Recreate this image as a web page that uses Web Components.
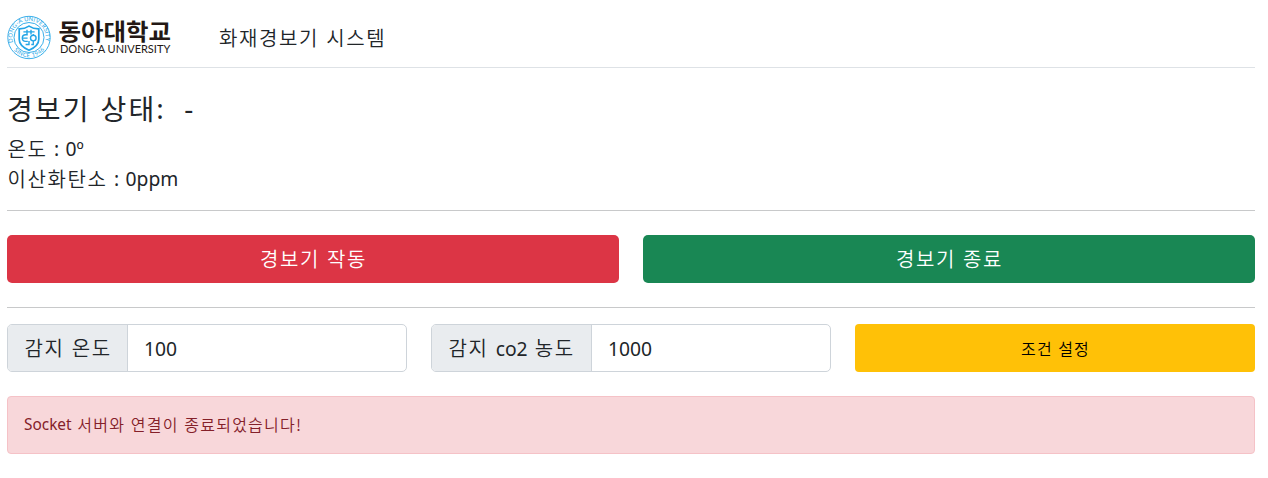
<!DOCTYPE html>
<html lang="ko"><head><meta charset="utf-8"><title>화재경보기 시스템</title>
<style>
body{margin:0;background:#fff;color:#212529;font-family:"Noto Sans","Noto Sans CJK KR",sans-serif}
</style></head><body>
<alarm-app></alarm-app>
<script>
const define=(name,html)=>customElements.define(name,class extends HTMLElement{
 constructor(){super();const t=document.createElement('template');t.innerHTML=html;this.attachShadow({mode:'open'}).append(t.content.cloneNode(true));}
});
define('ko-text',`<style>:host{display:inline-block;white-space:pre;font-family:"Noto Sans CJK KR",sans-serif;font-weight:var(--weight,350);font-size:var(--size,20px);letter-spacing:var(--track,1.6px);line-height:inherit}</style><slot></slot>`);
define('la-text',`<style>:host{display:inline-block;white-space:pre;font-family:"Noto Sans",sans-serif;font-size:var(--size,19.3px);letter-spacing:var(--latin-track,0);word-spacing:var(--latin-word,0);line-height:inherit}</style><slot></slot>`);
define('donga-logo',`<style>:host{display:block;width:166px;height:46px}svg{display:block}</style>
<svg width="166" height="46" viewBox="6 14 166 46">
<defs><path id="top" d="M13.4 43.2a16.6 16.6 0 1 1 31.2 0"/><path id="bottom" d="M11.4 46.5a19.8 19.8 0 0 0 35.2 0"/></defs>
<g fill="none" stroke="#23a5e6"><circle cx="29" cy="37.5" r="21.2" stroke-width=".9"/><circle cx="29" cy="37.5" r="15" stroke-width=".9"/>
<path d="M19.2 28.8q5.6.1 9.8-2.7 4.2 2.8 9.8 2.7v10.4q0 6.8-9.8 11-9.8-4.2-9.8-11z" stroke-width="1.7"/>
<path d="M23.4 31.9h11.2M27 29.8v4.6M31 29.8v4.6M27.8 34.8h-2.2q-3.3 0-3.3 3.3t3.3 3.3h2.2M22.6 38.1h5M25.6 44.5h3.4V41" stroke-width="1.4"/><circle cx="33.3" cy="38.1" r="2.8" stroke-width="1.4"/><path d="M33.3 34v1.3M33.3 41v3.5h-2" stroke-width="1.3"/></g>
<g font-family="Lato,sans-serif" font-size="5.8" fill="#23a5e6"><text><textPath href="#top" startOffset="1" textLength="60">DONG-A UNIVERSITY</textPath></text><text><textPath href="#bottom" startOffset="4.5" textLength="35">SINCE 1946</textPath></text></g>
<text x="58.5" y="39.7" textLength="112.5" lengthAdjust="spacingAndGlyphs" font-family="Noto Sans CJK KR,sans-serif" font-weight="700" font-size="23" fill="#231815">동아대학교</text>
<text x="60" y="53.3" textLength="110.3" lengthAdjust="spacingAndGlyphs" font-family="Lato,sans-serif" font-size="11" fill="#231815">DONG-A UNIVERSITY</text>
</svg>`);
define('app-header',`<style>:host{display:flex;box-sizing:border-box;height:68px;padding:14px 0 0;border-bottom:1px solid #dee2e6;line-height:30px}donga-logo{margin-left:-1px;flex:none}ko-text{margin:9px 0 0 47px;height:30px;--track:1.6px}</style><donga-logo></donga-logo><ko-text><slot></slot></ko-text>`);
define('alarm-status',`<style>:host{display:block;border-bottom:1px solid #c8c9ca;box-sizing:border-box;height:143px;padding-top:23px}h3{margin:0 0 9px;height:34px;line-height:34px;font-weight:400;display:flex;--size:28px;--track:2.1px;--weight:400}p{margin:0;height:30px;line-height:30px;display:flex}p ko-text{margin-left:.5px}p la-text{--latin-word:1.4px}.dash{margin-left:20.5px}</style>
<h3><ko-text>경보기 상태</ko-text><la-text>:</la-text><la-text class="dash">-</la-text></h3><p><ko-text>온도</ko-text><la-text> : 0º</la-text></p><p><ko-text>이산화탄소</ko-text><la-text> : 0ppm</la-text></p>`);
define('alarm-button',`<style>:host{display:block}button{display:flex;align-items:center;justify-content:center;width:100%;height:48px;border:0;border-radius:var(--radius,5px);padding:0;background:var(--bg);color:var(--fg,#fff);line-height:30px}ko-text{padding-left:1px}</style><button><ko-text><slot></slot></ko-text></button>`);
define('control-row',`<style>:host{display:grid;grid-template-columns:1fr 1fr;gap:24px;padding:24px 0;border-bottom:1px solid #c8c9ca}</style><slot></slot>`);
define('settings-row',`<style>:host{display:grid;grid-template-columns:repeat(3,1fr);gap:24px;padding:16px 0 24px}</style><slot></slot>`);
define('input-group',`<style>:host{display:flex;box-sizing:border-box;height:48px;border:1px solid #ced4da;border-radius:5px;overflow:hidden;line-height:46px}.label{box-sizing:border-box;width:var(--label);padding-left:16.5px;background:#e9ecef;border-right:1px solid #ced4da;display:flex;flex:none}.value{padding-left:16px;padding-top:1px}</style><div class="label"><slot name="label"></slot></div><div class="value"><la-text><slot></slot></la-text></div>`);
define('alert-box',`<style>:host{display:flex;box-sizing:border-box;height:58px;padding:15px 16px;border:1px solid #f5c2c7;border-radius:4px;background:#f8d7da;color:#842029;line-height:24px}</style><slot></slot>`);
define('alarm-app',`<style>:host{display:block;box-sizing:border-box;width:1268px;height:478px;padding:0 13px 0 7px}.yellow{--bg:#ffc107;--fg:#000;--size:16px;--track:1.1px;--radius:4px}.co2{display:flex}.co2 la-text{padding-top:1px}.socket{--size:15.4px;padding-top:1px}</style>
<app-header>화재경보기 시스템</app-header>
<alarm-status></alarm-status>
<control-row><alarm-button style="--bg:#dc3545">경보기 작동</alarm-button><alarm-button style="--bg:#198754">경보기 종료</alarm-button></control-row>
<settings-row><input-group style="--label:120px"><ko-text slot="label">감지 온도</ko-text>100</input-group><input-group style="--label:160px"><span slot="label" class="co2"><ko-text>감지 </ko-text><la-text>co2</la-text><ko-text> 농도</ko-text></span>1000</input-group><alarm-button class="yellow">조건 설정</alarm-button></settings-row>
<alert-box><la-text class="socket">Socket</la-text><ko-text style="--size:16px;--track:1.22px"> 서버와 연결이 종료되었습니다!</ko-text></alert-box>`);
</script></body></html>
